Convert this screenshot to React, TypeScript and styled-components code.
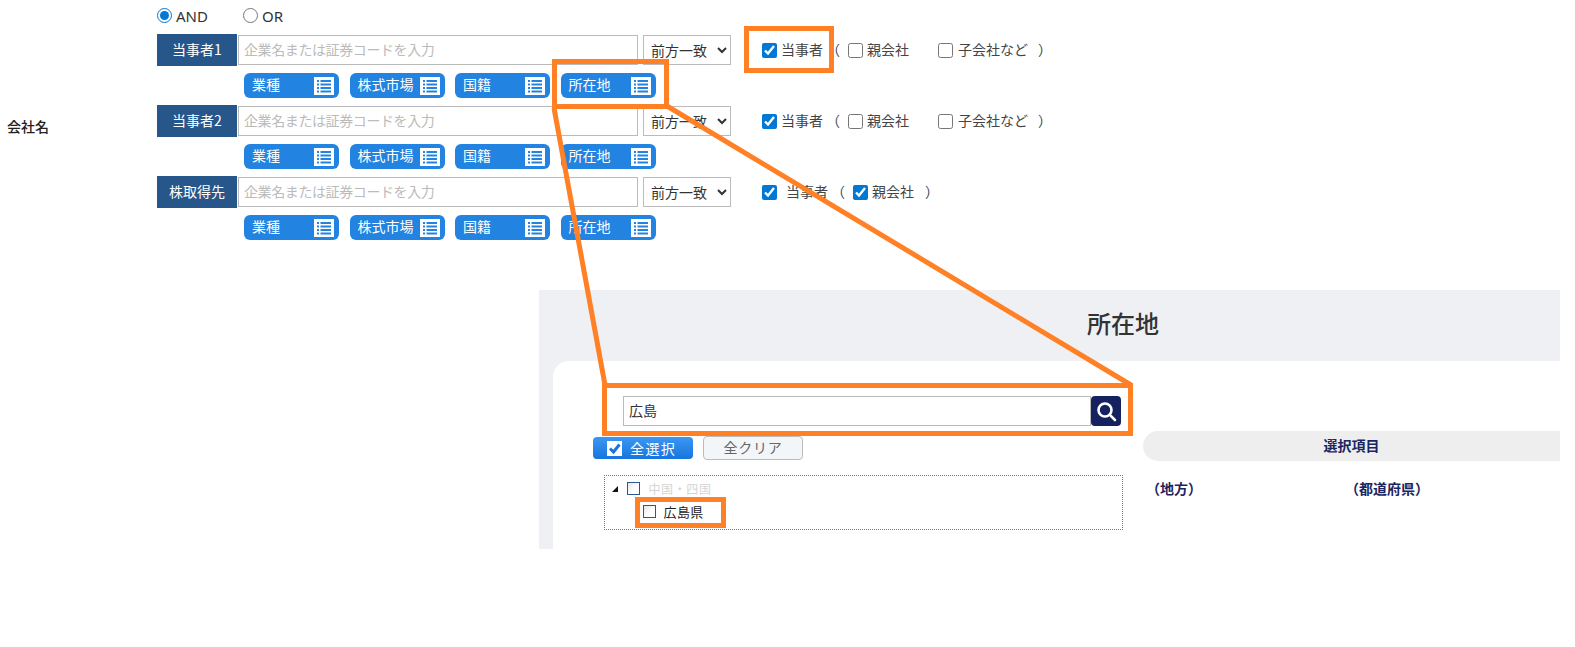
import styled, { createGlobalStyle } from "styled-components";

const GlobalStyle = createGlobalStyle`
  html, body {
    margin: 0;
    padding: 0;
    background: #fff;
  }
  body {
    font-family: "Noto Sans CJK JP", "Noto Sans", sans-serif;
    font-size: 14px;
    color: #333;
  }
`;

const Page = styled.div`
  position: relative;
  width: 1575px;
  height: 647px;
  overflow: hidden;
`;
const Filter = styled.section`
  display: flex;
  height: 290px;
`;
const FieldName = styled.div`
  width: 157px;
  padding: 115px 0 0 7px;
  box-sizing: border-box;
  font-size: 14px;
  font-weight: 500;
  line-height: 22px;
  color: #222;
`;
const FieldBody = styled.div`
  display: flex;
  flex-direction: column;
`;
const ModeRow = styled.div`
  display: flex;
  align-items: center;
  height: 34px;
  padding-bottom: 3px;
  box-sizing: border-box;
  line-height: 20px;
  color: #333;
`;
const ModeOption = styled.label<{ $width: number }>`
  display: flex;
  align-items: center;
  gap: 4px;
  width: ${(p) => p.$width}px;
  font-family: "Noto Sans", sans-serif;
  font-size: 15px;
`;
const Radio = styled.input.attrs({ type: "radio" })`
  width: 15px;
  height: 15px;
  margin: 0;
  accent-color: #0078d4;
`;
const Party = styled.div`
  display: flex;
  flex-direction: column;
  padding-bottom: 7px;
`;
const SearchLine = styled.div`
  display: flex;
  align-items: center;
  height: 32px;
`;
const PartyName = styled.div`
  display: flex;
  align-items: center;
  justify-content: center;
  width: 80px;
  height: 32px;
  padding-bottom: 2px;
  box-sizing: border-box;
  background: #27568a;
  color: #fff;
  font-size: 14px;
`;
const CompanyInput = styled.input`
  width: 400px;
  height: 30px;
  box-sizing: border-box;
  margin-left: 1px;
  padding: 0 5px 3px;
  border: 1px solid #bbb;
  background: #fff;
  font-family: inherit;
  font-size: 14px;
  outline: none;
  &::placeholder {
    color: #bbb;
    letter-spacing: -0.4px;
    opacity: 1;
  }
`;
const MatchSelect = styled.select`
  width: 88px;
  height: 30px;
  box-sizing: border-box;
  margin-left: 5px;
  padding: 0 4px 0 3px;
  border: 1px solid #bbb;
  border-radius: 0;
  background: #fff;
  color: #333;
  font-family: inherit;
  font-size: 14px;
`;
const Checks = styled.div`
  display: flex;
  align-items: center;
  margin-left: 31px;
  color: #444;
  font-size: 14px;
  line-height: 20px;
`;
const Check = styled.input.attrs({ type: "checkbox" })<{ $left?: number }>`
  width: 15px;
  height: 15px;
  margin: 0 0 0 ${(p) => p.$left ?? 0}px;
  accent-color: #0078d4;
`;
const CheckText = styled.span<{ $left: number }>`
  margin-left: ${(p) => p.$left}px;
  padding-bottom: 2px;
  white-space: nowrap;
`;
const Paren = styled.span<{ $left: number }>`
  margin-left: ${(p) => p.$left}px;
  padding-bottom: 2px;
`;
const PickerRow = styled.div`
  display: flex;
  gap: 10.5px;
  margin: 7px 0 0 87px;
`;
const Picker = styled.button`
  display: flex;
  align-items: center;
  justify-content: space-between;
  width: 95px;
  height: 25px;
  box-sizing: border-box;
  padding: 0 5px 0 8px;
  border: 0;
  border-radius: 6px;
  background: #2283e0;
  color: #fff;
  font-family: inherit;
  font-size: 14px;
  line-height: 20px;
`;
const PickerText = styled.span`
  padding-bottom: 4px;
`;
const Panel = styled.section`
  display: flex;
  flex-direction: column;
  height: 259px;
  margin: 0 15px 0 539px;
  background: #eff0f4;
  overflow: hidden;
`;
const PanelTitle = styled.h2`
  display: flex;
  align-items: center;
  justify-content: center;
  height: 71px;
  margin: 0;
  padding: 0 0 6px 147px;
  box-sizing: border-box;
  color: #333;
  font-size: 24px;
  font-weight: 500;
`;
const PanelBody = styled.div`
  display: flex;
  flex: 1;
  margin-left: 14px;
  border-top-left-radius: 16px;
  background: #fff;
`;
const LeftPane = styled.div`
  display: flex;
  flex-direction: column;
  width: 590px;
  flex-shrink: 0;
  box-sizing: border-box;
  padding: 35px 0 0 40px;
`;
const SearchBar = styled.div`
  display: flex;
  margin-left: 30px;
  height: 30px;
`;
const PlaceInput = styled.input`
  width: 468px;
  box-sizing: border-box;
  padding: 0 5px 2px;
  border: 1px solid #bbb;
  background: #fff;
  color: #333;
  font-family: inherit;
  font-size: 14px;
  outline: none;
`;
const SearchButton = styled.button`
  display: flex;
  align-items: center;
  justify-content: center;
  width: 30px;
  padding: 0;
  border: 0;
  border-radius: 4px;
  background: #14235f;
`;
const BulkRow = styled.div`
  display: flex;
  align-items: center;
  gap: 10px;
  height: 24px;
  margin-top: 10px;
`;
const SelectAll = styled.button`
  display: flex;
  align-items: center;
  gap: 8px;
  width: 100px;
  height: 22px;
  box-sizing: border-box;
  padding: 0 0 0 14px;
  border: 0;
  border-radius: 4px;
  background: linear-gradient(#3c97f2, #1675df);
  color: #fff;
  font-family: inherit;
  font-size: 14px;
  letter-spacing: 1.4px;
`;
const WhiteTick = styled.span`
  display: flex;
  width: 15px;
  height: 15px;
  background: #fff;
`;
const ClearAll = styled.button`
  width: 100px;
  height: 24px;
  box-sizing: border-box;
  padding: 0 0 2px;
  border: 1px solid #bbb;
  border-radius: 4px;
  background: #f3f6f9;
  color: #666;
  font-family: inherit;
  font-size: 14px;
  letter-spacing: 0.7px;
`;
const Tree = styled.div`
  display: flex;
  flex-direction: column;
  width: 519.5px;
  height: 55px;
  box-sizing: border-box;
  margin: 15px 0 0 10.5px;
  padding: 1px 0 0 7px;
  border: 1px dotted #777;
`;
const TreeRow = styled.div<{ $indent: number }>`
  display: flex;
  align-items: center;
  height: 23px;
  padding-left: ${(p) => p.$indent}px;
`;
const Caret = styled.span`
  width: 0;
  height: 0;
  margin-right: 9px;
  border-style: solid;
  border-width: 0 0 6px 6px;
  border-color: transparent transparent #111 transparent;
`;
const TreeBox = styled.span`
  width: 13px;
  height: 13px;
  box-sizing: border-box;
  border: 1px solid #2a5a90;
  background: linear-gradient(135deg, #e4e4e4, #fff 55%);
`;
const RegionText = styled.span`
  margin-left: 9px;
  padding-bottom: 1px;
  color: #d4d4d4;
  font-size: 12px;
  letter-spacing: 0.6px;
`;
const PrefText = styled.span`
  margin-left: 8px;
  padding-bottom: 1px;
  color: #222;
  font-size: 13px;
  letter-spacing: 0.4px;
`;
const RightPane = styled.div`
  display: flex;
  flex-direction: column;
  flex: 1;
  padding-top: 70px;
`;
const SelectedBar = styled.div`
  display: flex;
  align-items: center;
  justify-content: center;
  height: 30px;
  padding-bottom: 3px;
  box-sizing: border-box;
  border-radius: 15px 0 0 15px;
  background: #eee;
  color: #1b2560;
  font-size: 14px;
  font-weight: 700;
`;
const ColumnHeads = styled.div`
  display: flex;
  padding: 16px 0 0 3px;
  color: #1b2560;
  font-size: 14px;
  font-weight: 700;
  line-height: 22px;
`;
const ColumnHead = styled.div`
  width: 199px;
`;
const Annotations = styled.svg`
  position: absolute;
  top: 0;
  left: 0;
  pointer-events: none;
`;

const ListIcon = () => (
  <svg width="20" height="18" viewBox="0 0 20 18">
    <rect width="20" height="18" fill="#fff" />
    {[3, 6.5, 10, 13.5].map((y) => (
      <g key={y} fill="#2283e0">
        <rect x="3" y={y} width="2" height="2" />
        <rect x="6.5" y={y} width="10.5" height="2" />
      </g>
    ))}
  </svg>
);

const pickers = ["業種", "株式市場", "国籍", "所在地"];

function PartyBlock({ name, simple }: { name: string; simple?: boolean }) {
  return (
    <Party>
      <SearchLine>
        <PartyName>{name}</PartyName>
        <CompanyInput placeholder="企業名または証券コードを入力" />
        <MatchSelect defaultValue="前方一致">
          <option>前方一致</option>
          <option>完全一致</option>
        </MatchSelect>
        {simple ? (
          <Checks>
            <Check defaultChecked />
            <CheckText $left={9}>当事者</CheckText>
            <Paren $left={3}>（</Paren>
            <Check $left={8} defaultChecked />
            <CheckText $left={4}>親会社</CheckText>
            <Paren $left={11}>）</Paren>
          </Checks>
        ) : (
          <Checks>
            <Check defaultChecked />
            <CheckText $left={4}>当事者</CheckText>
            <Paren $left={3}>（</Paren>
            <Check $left={8} />
            <CheckText $left={4}>親会社</CheckText>
            <Check $left={29} />
            <CheckText $left={5}>子会社など</CheckText>
            <Paren $left={10}>）</Paren>
          </Checks>
        )}
      </SearchLine>
      <PickerRow>
        {pickers.map((p) => (
          <Picker key={p}>
            <PickerText>{p}</PickerText>
            <ListIcon />
          </Picker>
        ))}
      </PickerRow>
    </Party>
  );
}

function App() {
  return (
    <Page>
      <GlobalStyle />
      <Filter>
        <FieldName>会社名</FieldName>
        <FieldBody>
          <ModeRow>
            <ModeOption $width={86}>
              <Radio name="mode" defaultChecked />
              AND
            </ModeOption>
            <ModeOption $width={60}>
              <Radio name="mode" />
              OR
            </ModeOption>
          </ModeRow>
          <PartyBlock name="当事者1" />
          <PartyBlock name="当事者2" />
          <PartyBlock name="株取得先" simple />
        </FieldBody>
      </Filter>
      <Panel>
        <PanelTitle>所在地</PanelTitle>
        <PanelBody>
          <LeftPane>
            <SearchBar>
              <PlaceInput defaultValue="広島" />
              <SearchButton>
                <svg width="22" height="22" viewBox="0 0 22 22" fill="none" stroke="#fff" strokeWidth="2.6">
                  <circle cx="10" cy="10" r="6.5" />
                  <path d="M14.8 14.8 L20 20" strokeLinecap="round" />
                </svg>
              </SearchButton>
            </SearchBar>
            <BulkRow>
              <SelectAll>
                <WhiteTick>
                  <svg width="15" height="15" viewBox="0 0 15 15" fill="none" stroke="#1675df" strokeWidth="3">
                    <path d="M3 7.5 L6.5 11 L12.5 3.5" />
                  </svg>
                </WhiteTick>
                全選択
              </SelectAll>
              <ClearAll>全クリア</ClearAll>
            </BulkRow>
            <Tree>
              <TreeRow $indent={0}>
                <Caret />
                <TreeBox />
                <RegionText>中国・四国</RegionText>
              </TreeRow>
              <TreeRow $indent={31}>
                <TreeBox />
                <PrefText>広島県</PrefText>
              </TreeRow>
            </Tree>
          </LeftPane>
          <RightPane>
            <SelectedBar>選択項目</SelectedBar>
            <ColumnHeads>
              <ColumnHead>（地方）</ColumnHead>
              <ColumnHead>（都道府県）</ColumnHead>
            </ColumnHeads>
          </RightPane>
        </PanelBody>
      </Panel>
      <Annotations width="1575" height="647" viewBox="0 0 1575 647" fill="none" stroke="#ff8025" strokeWidth="5">
        <rect x="554.5" y="61.5" width="112" height="45" />
        <rect x="746.5" y="28.5" width="85" height="42" />
        <rect x="604.5" y="385.5" width="526" height="48" />
        <rect x="637.5" y="499.5" width="86" height="26" />
        <path d="M554 108 L605 385" />
        <path d="M667 106 L1131 385" />
      </Annotations>
    </Page>
  );
}

export default App;
